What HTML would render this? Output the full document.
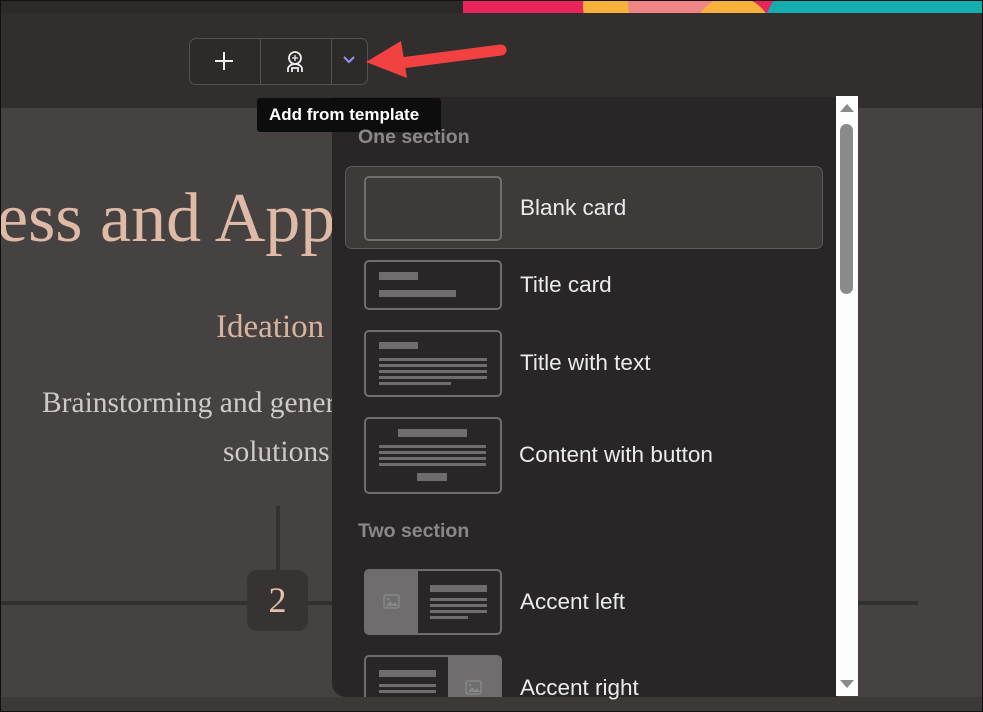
<!DOCTYPE html>
<html><head><meta charset="utf-8"><style>
*{margin:0;padding:0;box-sizing:border-box}
body{width:983px;height:712px;overflow:hidden;background:#111;position:relative;font-family:"Liberation Sans",sans-serif}
.a{position:absolute}
.th{position:absolute;left:363px;width:138px;border:2px solid #6f6d6d;border-radius:5px;overflow:hidden}
.b{position:absolute;background:#6f6d6d}
.lbl{position:absolute;left:519px;color:#ecebeb;font-size:22.5px;transform:translateY(-50%);white-space:nowrap}
.sec{position:absolute;left:357px;color:#8b8889;font-size:19.5px;font-weight:bold}
</style></head><body>
<div class="a" style="left:1px;top:1px;width:981px;height:710px;background:#464241;overflow:hidden">
 <div class="a" style="left:0;top:0;width:981px;height:13px;background:#2c2929"></div>
 <div class="a" style="left:462px;top:0;width:519px;height:12px;background:#e8245a;overflow:hidden">
  <div class="a" style="left:120px;top:-40px;width:90px;height:90px;border-radius:50%;background:#f7b23b"></div>
  <div class="a" style="left:165px;top:-50px;width:100px;height:100px;border-radius:50%;background:#f08585"></div>
  <div class="a" style="left:230px;top:-5px;width:80px;height:80px;border-radius:50%;background:#f7b23b"></div>
  <div class="a" style="left:290px;top:-60px;width:260px;height:260px;border-radius:50%;background:#15aeae"></div>
 </div>
 <div class="a" style="left:0;top:12px;width:981px;height:95px;background:#322e2d"></div>
 <div class="a" style="left:-4px;top:178px;font-family:'Liberation Serif',serif;font-size:70px;color:#dfbba7;white-space:nowrap">ess and Applications</div>
 <div class="a" style="left:215px;top:308px;font-family:'Liberation Serif',serif;font-size:33px;color:#d9b39f;white-space:nowrap">Ideation</div>
 <div class="a" style="left:41px;top:386px;font-family:'Liberation Serif',serif;font-size:29.5px;color:#cfcaca;white-space:nowrap">Brainstorming and generating</div>
 <div class="a" style="left:222px;top:435px;font-family:'Liberation Serif',serif;font-size:29.5px;color:#cfcaca;white-space:nowrap">solutions</div>
 <div class="a" style="left:275px;top:505px;width:4px;height:65px;background:#333030"></div>
 <div class="a" style="left:0;top:600px;width:917px;height:4px;background:#333030"></div>
 <div class="a" style="left:246px;top:569px;width:61px;height:61px;border-radius:10px;background:#363332;color:#e3c0ab;font-family:'Liberation Serif',serif;font-size:36px;text-align:center;line-height:61px">2</div>
 <div class="a" style="left:188px;top:37px;width:179px;height:47px;border:1px solid #555150;border-radius:7px;background:#2d2a29"></div>
 <div class="a" style="left:259px;top:38px;width:1px;height:45px;background:#555150"></div>
 <div class="a" style="left:330px;top:38px;width:1px;height:45px;background:#555150"></div>
 <svg class="a" style="left:212px;top:49px" width="22" height="22"><path d="M11 2v18M2 11h18" stroke="#eee" stroke-width="2"/></svg>
 <svg class="a" style="left:283px;top:49px" width="22" height="24" viewBox="0 0 22 24" fill="none" stroke="#eee" stroke-width="1.8"><circle cx="11" cy="8" r="6"/><path d="M8 8h6M11 5v6" stroke-width="1.3"/><path d="M4 22v-3a7 5 0 0 1 14 0v3"/><path d="M8 22v-4h6v4"/></svg>
 <svg class="a" style="left:341px;top:54px" width="14" height="10"><path d="M2 2l5 5 5-5" stroke="#9a8ff0" stroke-width="2" fill="none"/></svg>
 <svg class="a" style="left:360px;top:35px" width="160" height="50"><path d="M40 27 L140 14" stroke="#f24141" stroke-width="11" stroke-linecap="round"/><path d="M5 26 L40 5 L46 42 Z" fill="#f24141"/></svg>
 <div class="a" style="left:331px;top:96px;width:505px;height:600px;background:#282627;border-bottom-left-radius:14px"></div>
 <div class="a" style="left:835px;top:95px;width:22px;height:600px;background:#fdfdfd"></div>
 <svg class="a" style="left:837px;top:101px" width="18" height="12"><path d="M2 10 L9 2 L16 10Z" fill="#8a8a8a"/></svg>
 <div class="a" style="left:839px;top:123px;width:13px;height:170px;border-radius:7px;background:#8a8a8a"></div>
 <svg class="a" style="left:837px;top:677px" width="18" height="12"><path d="M2 2 L9 10 L16 2Z" fill="#8a8a8a"/></svg>
 <div class="a" style="left:256px;top:97px;width:184px;height:34px;background:#0e0d0d;border-radius:3px;color:#fff;font-size:17px;font-weight:bold;line-height:34px;padding-left:12px;white-space:nowrap">Add from template</div>
 <div class="sec" style="top:125px">One section</div>
 <div class="sec" style="top:519px">Two section</div>
 <div class="a" style="left:344px;top:165px;width:478px;height:83px;background:#3e3a39;border:1px solid #5e5a59;border-radius:7px"></div>
 <div class="th" style="top:175px;height:65px"></div>
 <div class="lbl" style="top:207px">Blank card</div>
 <div class="th" style="top:259px;height:50px"><div class="b" style="left:13px;top:10px;width:39px;height:8px"></div><div class="b" style="left:13px;top:28px;width:77px;height:7px"></div></div>
 <div class="lbl" style="top:284px">Title card</div>
 <div class="th" style="top:329px;height:67px"><div class="b" style="left:13px;top:10px;width:39px;height:7px"></div><div class="b" style="left:13px;top:26px;width:108px;height:3px"></div><div class="b" style="left:13px;top:32px;width:108px;height:3px"></div><div class="b" style="left:13px;top:38px;width:108px;height:3px"></div><div class="b" style="left:13px;top:44px;width:108px;height:3px"></div><div class="b" style="left:13px;top:50px;width:72px;height:3px"></div></div>
 <div class="lbl" style="top:362px">Title with text</div>
 <div class="th" style="top:416px;height:77px"><div class="b" style="left:32px;top:10px;width:69px;height:8px"></div><div class="b" style="left:13px;top:26px;width:107px;height:3px"></div><div class="b" style="left:13px;top:32px;width:107px;height:3px"></div><div class="b" style="left:13px;top:38px;width:107px;height:3px"></div><div class="b" style="left:13px;top:44px;width:107px;height:3px"></div><div class="b" style="left:51px;top:54px;width:30px;height:8px"></div></div>
 <div class="lbl" style="top:454px;left:518px">Content with button</div>
 <div class="th" style="top:568px;height:66px"><div class="b" style="left:0;top:0;width:52px;height:62px"></div>
  <svg class="a" style="left:17px;top:23px" width="17" height="15"><rect x="1" y="1" width="15" height="13" rx="2" fill="none" stroke="#888" stroke-width="1.5"/><path d="M3 12l4-5 3 3 2-2 3 4z" fill="#888"/><circle cx="5" cy="5" r="1.3" fill="#888"/></svg>
  <div class="b" style="left:64px;top:14px;width:57px;height:7px"></div><div class="b" style="left:64px;top:27px;width:57px;height:3px"></div><div class="b" style="left:64px;top:33px;width:57px;height:3px"></div><div class="b" style="left:64px;top:39px;width:57px;height:3px"></div><div class="b" style="left:64px;top:45px;width:38px;height:3px"></div></div>
 <div class="lbl" style="top:601px">Accent left</div>
 <div class="th" style="top:654px;height:66px"><div class="b" style="left:82px;top:0;width:54px;height:62px"></div>
  <svg class="a" style="left:99px;top:23px" width="17" height="15"><rect x="1" y="1" width="15" height="13" rx="2" fill="none" stroke="#888" stroke-width="1.5"/><path d="M3 12l4-5 3 3 2-2 3 4z" fill="#888"/><circle cx="5" cy="5" r="1.3" fill="#888"/></svg>
  <div class="b" style="left:13px;top:13px;width:57px;height:7px"></div><div class="b" style="left:13px;top:27px;width:57px;height:3px"></div><div class="b" style="left:13px;top:33px;width:57px;height:3px"></div></div>
 <div class="a" style="left:331px;top:696px;width:650px;height:14px;background:#3c3938"></div>
 <div class="a" style="left:0;top:696px;width:331px;height:14px;background:#3c3938"></div>
 <div class="lbl" style="top:687px">Accent right</div>
</div>
</body></html>
